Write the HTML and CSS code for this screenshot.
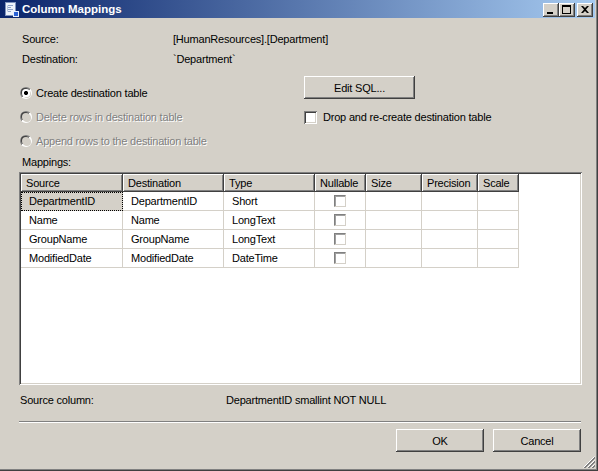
FILE: index.html
```html
<!DOCTYPE html>
<html>
<head>
<meta charset="utf-8">
<link rel="stylesheet" href="styles.css">
</head>
<body>
<div class="window">
  <div class="titlebar">
    <svg class="app-icon" width="16" height="16" viewBox="0 0 16 16">
      <rect x="2.5" y="1.5" width="10" height="13" fill="#EEF3FB" stroke="#7F93BC"/>
      <path d="M5 4.5h5M5 6.5h3M5 8.5h5M5 10.5h3" stroke="#8FA3C8"/>
      <path d="M4.5 4.5v6" stroke="#B8C6E0"/>
      <rect x="10.5" y="10.5" width="5" height="5" fill="#2A62D6" stroke="#E8F0FF"/>
    </svg>
    <span class="title">Column Mappings</span>
    <div class="tbtns">
      <span class="tbtn"><svg width="16" height="14" viewBox="0 0 16 14"><rect x="4" y="9" width="6" height="2" fill="#000"/></svg></span>
      <span class="tbtn"><svg width="16" height="14" viewBox="0 0 16 14"><rect x="3.5" y="2.5" width="8" height="8" fill="none" stroke="#000"/><rect x="3" y="2" width="9" height="2" fill="#000"/></svg></span>
      <span class="tbtn close"><svg width="16" height="14" viewBox="0 0 16 14"><path d="M4 3h2l2 2 2-2h2l-3 3.5 3 3.5h-2l-2-2-2 2H4l3-3.5z" fill="#000"/></svg></span>
    </div>
  </div>

  <div class="client">
    <div class="info">
      <span>Source:</span><span>[HumanResources].[Department]</span>
      <span>Destination:</span><span>`Department`</span>
    </div>

    <div class="options">
      <div class="radios">
        <div class="opt-row"><span class="radio checked"><span class="well"></span></span><span>Create destination table</span></div>
        <div class="opt-row disabled"><span class="radio"><span class="well"></span></span><span>Delete rows in destination table</span></div>
        <div class="opt-row disabled"><span class="radio"><span class="well"></span></span><span>Append rows to the destination table</span></div>
      </div>
      <div class="side">
        <div class="btn btn-edit">Edit SQL...</div>
        <div class="opt-row check-row"><span class="checkbox"></span><span>Drop and re-create destination table</span></div>
      </div>
    </div>

    <div class="mappings-label">Mappings:</div>

    <div class="grid-box">
      <div class="grid">
        <div class="grow head">
          <div class="hc">Source</div>
          <div class="hc">Destination</div>
          <div class="hc">Type</div>
          <div class="hc">Nullable</div>
          <div class="hc">Size</div>
          <div class="hc">Precision</div>
          <div class="hc">Scale</div>
        </div>
        <div class="grow">
          <div class="dc focus">DepartmentID</div>
          <div class="dc">DepartmentID</div>
          <div class="dc">Short</div>
          <div class="dc center"><span class="cell-check"></span></div>
          <div class="dc"></div>
          <div class="dc"></div>
          <div class="dc"></div>
        </div>
        <div class="grow">
          <div class="dc">Name</div>
          <div class="dc">Name</div>
          <div class="dc">LongText</div>
          <div class="dc center"><span class="cell-check"></span></div>
          <div class="dc"></div>
          <div class="dc"></div>
          <div class="dc"></div>
        </div>
        <div class="grow">
          <div class="dc">GroupName</div>
          <div class="dc">GroupName</div>
          <div class="dc">LongText</div>
          <div class="dc center"><span class="cell-check"></span></div>
          <div class="dc"></div>
          <div class="dc"></div>
          <div class="dc"></div>
        </div>
        <div class="grow">
          <div class="dc">ModifiedDate</div>
          <div class="dc">ModifiedDate</div>
          <div class="dc">DateTime</div>
          <div class="dc center"><span class="cell-check"></span></div>
          <div class="dc"></div>
          <div class="dc"></div>
          <div class="dc"></div>
        </div>
      </div>
    </div>

    <div class="source-col">
      <span class="sc-label">Source column:</span>
      <span>DepartmentID smallint NOT NULL</span>
    </div>

    <div class="separator"></div>

    <div class="actions">
      <div class="btn btn-action">OK</div>
      <div class="btn btn-action">Cancel</div>
    </div>
  </div>

  <svg class="grip" width="12" height="12" viewBox="0 0 12 12">
    <path d="M11.5 0.5L0.5 11.5M11.5 4.5L4.5 11.5M11.5 8.5L8.5 11.5" stroke="#fff"/>
    <path d="M12 1L1 12M12 2L2 12M12 5L5 12M12 6L6 12M12 9L9 12M12 10L10 12" stroke="#808080"/>
  </svg>
</div>
</body>
</html>
```

FILE: styles.css
```css
html, body {
  margin: 0;
  padding: 0;
  background: #D4D0C8;
}

.window {
  position: relative;
  width: 598px;
  height: 471px;
  box-sizing: border-box;
  padding: 0 3px 3px 0;
  background: #D4D0C8;
  box-shadow: inset -1px -1px #404040, inset -2px -2px #808080;
  display: flex;
  flex-direction: column;
  font-family: "Liberation Sans", Arial, sans-serif;
  font-size: 11px;
  letter-spacing: -0.2px;
  color: #000;
  overflow: hidden;
}

/* Title bar */
.titlebar {
  height: 18px;
  flex: none;
  display: flex;
  align-items: center;
  padding: 0 2px 0 3px;
  background: linear-gradient(to right, #0A246A, #A6CAF0);
}
.app-icon { flex: none; display: block; }
.title {
  flex: 1;
  margin-left: 3px;
  color: #fff;
  font-weight: bold;
  font-size: 11.5px;
  letter-spacing: 0;
}
.tbtns { display: flex; margin-top: 1px; }
.tbtn {
  width: 16px;
  height: 14px;
  background: #D4D0C8;
  box-shadow: inset -1px -1px #404040, inset 1px 1px #fff, inset -2px -2px #808080, inset 2px 2px #D4D0C8;
}
.tbtn svg { display: block; }
.tbtn.close { margin-left: 2px; }

/* Client area */
.client {
  flex: 1;
  display: flex;
  flex-direction: column;
  padding: 0 13px 0 19px;
}

.info {
  display: grid;
  grid-template-columns: 151px auto;
  grid-auto-rows: 20px;
  align-items: center;
  margin-top: 11px;
  padding-left: 3px;
}

.options {
  display: flex;
  height: 82px;
}
.radios {
  width: 284px;
  padding-top: 14px;
  padding-left: 1px;
  display: flex;
  flex-direction: column;
  gap: 4px;
}
.opt-row {
  height: 20px;
  display: flex;
  align-items: center;
}
.opt-row.disabled {
  color: #808080;
  text-shadow: 1px 1px 0 #fff;
}

.radio {
  width: 12px;
  height: 12px;
  margin-right: 4px;
  border-radius: 50%;
  background: linear-gradient(135deg, #808080 50%, #fff 50%);
  display: flex;
  align-items: center;
  justify-content: center;
  flex: none;
}
.radio .well {
  width: 8px;
  height: 8px;
  border-radius: 50%;
  background: #fff;
  box-shadow: -1px -1px 0 0 #404040, 1px 1px 0 0 #D4D0C8;
}
.radio.checked .well {
  background: radial-gradient(circle, #000 1.8px, #fff 2.3px);
}
.opt-row.disabled .radio .well { background: #D4D0C8; }

.side {
  padding-top: 7px;
}
.btn {
  box-sizing: border-box;
  height: 23px;
  display: flex;
  align-items: center;
  justify-content: center;
  background: #D4D0C8;
  box-shadow: inset -1px -1px #404040, inset 1px 1px #fff, inset -2px -2px #808080, inset 2px 2px #D4D0C8;
}
.btn-edit { width: 111px; }
.check-row { margin-top: 8px; }
.checkbox {
  width: 13px;
  height: 13px;
  flex: none;
  margin-right: 6px;
  background: #fff;
  box-shadow: inset 1px 1px #808080, inset -1px -1px #fff, inset 2px 2px #404040, inset -2px -2px #D4D0C8;
}

.mappings-label {
  height: 20px;
  line-height: 20px;
  margin-top: 1px;
  padding-left: 3px;
}

/* Grid */
.grid-box {
  height: 213px;
  box-sizing: border-box;
  padding: 2px;
  background: #fff;
  box-shadow: inset 1px 1px #808080, inset -1px -1px #fff, inset 2px 2px #404040, inset -2px -2px #D4D0C8;
}
.grid { width: 498px; }
.grow {
  display: grid;
  grid-template-columns: 102px 101px 91px 51px 56px 56px 41px;
}
.hc {
  height: 18px;
  line-height: 18px;
  padding-left: 5px;
  background: #D4D0C8;
  box-shadow: inset -1px -1px #404040, inset 1px 1px #fff, inset -2px -2px #808080;
  white-space: nowrap;
}
.dc {
  box-sizing: border-box;
  height: 19px;
  line-height: 18px;
  padding-left: 8px;
  border-right: 1px solid #D4D0C8;
  border-bottom: 1px solid #D4D0C8;
  white-space: nowrap;
}
.dc.focus {
  background: #D4D0C8;
  outline: 1px dotted #000;
  outline-offset: -1px;
}
.dc.center {
  padding-left: 0;
  display: flex;
  align-items: center;
  justify-content: center;
}
.cell-check {
  width: 12px;
  height: 12px;
  box-sizing: border-box;
  background: #fff;
  border: 1px solid;
  border-color: #808080 #D4D0C8 #D4D0C8 #808080;
  box-shadow: inset 1px 1px #A0A0A0;
}

.source-col {
  display: flex;
  height: 20px;
  line-height: 20px;
  margin-top: 5px;
  padding-left: 1px;
}
.sc-label { width: 206px; }

.separator {
  margin-top: 11px;
  width: 562px;
  border-top: 1px solid #808080;
  border-bottom: 1px solid #fff;
}

.actions {
  display: flex;
  justify-content: flex-end;
  gap: 9px;
  margin-top: 6px;
  padding-right: 1px;
}
.btn-action { width: 88px; }

.grip {
  position: absolute;
  right: 3px;
  bottom: 3px;
  display: block;
}
```
